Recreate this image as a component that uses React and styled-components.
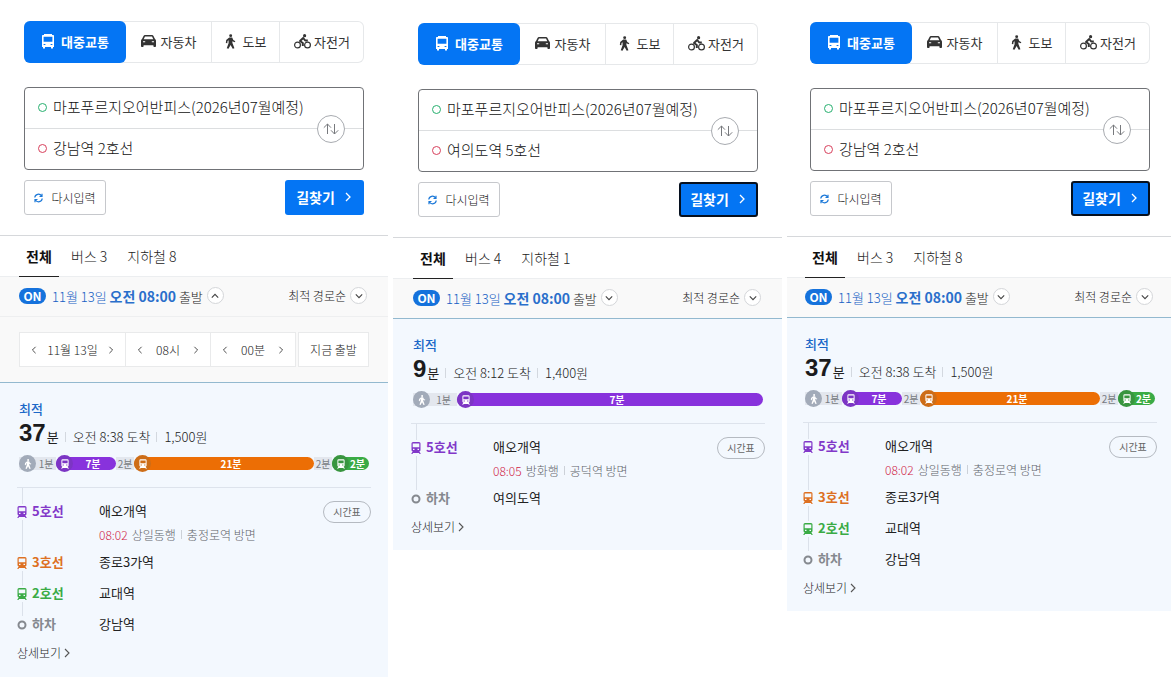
import React from 'react';
import styled, { createGlobalStyle, css } from 'styled-components';

const Global = createGlobalStyle`
  * { box-sizing: border-box; }
  body { margin: 0; background: #fff; }
  body, button, input { font-family: "Noto Sans CJK KR", "Noto Sans", sans-serif; color: #222; }
  button { border: 0; padding: 0; background: none; cursor: pointer; }
  ul { list-style: none; margin: 0; padding: 0; }
`;

const Page = styled.main`
  display: grid;
  grid-template-columns: 388fr 389fr 384fr;
  gap: 5px;
  align-items: start;
`;
const Panel = styled.section`
  min-width: 0;
  padding-top: ${p => p.$top}px;
`;
const Search = styled.form`
  padding: 0 ${p => p.$right}px 20px ${p => p.$left}px;
  border-bottom: 1px solid #d6d8db;
`;

const Modes = styled.div`
  display: grid;
  grid-template-columns: 102fr 86fr 68fr 84fr;
  height: 42px;
  border-radius: 6px;
  box-shadow: inset 0 0 0 1px #e6e8ea;
`;
const Mode = styled.button`
  display: flex;
  align-items: center;
  justify-content: center;
  gap: ${p => p.$gap}px;
  padding-bottom: 2px;
  font-size: 13px;
  color: #333;
  border-right: 1px solid #e6e8ea;
  white-space: nowrap;
  &:last-child { border-right: 0; }
  ${p => p.$active && css`
    background: #0475f4;
    color: #fff;
    font-weight: 700;
    border: 0;
    border-radius: 6px;
  `}
`;

const Places = styled.div`
  position: relative;
  margin-top: 24px;
  border: 1px solid #707276;
  border-radius: 4px;
`;
const Place = styled.label`
  display: flex;
  align-items: center;
  gap: 6px;
  height: 40px;
  padding: 0 0 2px 13px;
  & + & { border-top: 1px solid #dcdee0; height: 41px; }
`;
const Dot = styled.span`
  width: 9px;
  height: 9px;
  flex: none;
  border: 1px solid ${p => p.$color};
  border-radius: 50%;
`;
const PlaceInput = styled.input`
  flex: 1;
  min-width: 0;
  height: 30px;
  padding: 0 0 2px;
  border: 0;
  outline: 0;
  background: none;
  font-size: 15px;
  font-weight: 300;
  color: #111;
`;
const Swap = styled.button`
  position: absolute;
  right: 18px;
  top: 27px;
  width: 28px;
  height: 28px;
  display: grid;
  place-items: center;
  background: #fff;
  border: 1px solid #a8abb0;
  border-radius: 50%;
`;
const Actions = styled.div`
  display: flex;
  justify-content: space-between;
  margin-top: 10px;
`;
const Reset = styled.button`
  display: flex;
  align-items: center;
  justify-content: center;
  gap: 8px;
  width: 82px;
  height: 35px;
  border: 1px solid #c6c8cc;
  border-radius: 3px;
  font-size: 12px;
  font-weight: 300;
`;
const Find = styled.button`
  display: flex;
  align-items: center;
  justify-content: center;
  gap: 8px;
  width: 79px;
  height: 35px;
  padding-bottom: 2px;
  background: #0475f4;
  border-radius: 3px;
  color: #fff;
  font-size: 14px;
  font-weight: 700;
  ${p => p.$focused && css`border: 2px solid #06101f;`}
`;

const Tabs = styled.nav`
  display: flex;
  height: 41px;
  padding-left: ${p => p.$left}px;
  gap: 12px;
  border-bottom: 1px solid #eceef0;
`;
const Tab = styled.button`
  height: 41px;
  padding-bottom: 2px;
  font-size: 14px;
  font-weight: 300;
  & + & { margin-right: 8px; }
  ${p => p.$active && css`
    width: 40px;
    padding-bottom: 0;
    font-weight: 700;
    color: #111;
    border-bottom: 1px solid #222;
  `}
`;

const Filter = styled.div`
  display: flex;
  align-items: center;
  height: 39px;
  padding: 0 ${p => p.$right}px 2px ${p => p.$left}px;
  background: #f9f9f9;
`;
const On = styled.span`
  width: 27px;
  height: 16px;
  margin-right: 6px;
  border-radius: 8px;
  background: #1572dc;
  color: #fff;
  font-size: 12px;
  font-weight: 700;
  line-height: 15px;
  text-align: center;
`;
const Depart = styled.button`
  display: flex;
  align-items: center;
  gap: 4px;
  font-size: 13px;
  font-weight: 300;
  white-space: nowrap;
  time { color: #1560c4; }
  b { font-size: 14px; font-weight: 700; color: #2a6fcb; }
`;
const Sort = styled(Depart)`
  margin-left: auto;
  font-size: 12px;
`;
const Round = styled.span`
  display: grid;
  place-items: center;
  width: 17px;
  height: 17px;
  border: 1px solid #d4d6d9;
  border-radius: 50%;
  background: #fff;
`;

const Picker = styled.div`
  display: flex;
  gap: 2px;
  padding: 15px 19px;
  border-top: 1px solid #eeeff0;
  background: #f9f9f9;
`;
const Fields = styled.div`
  flex: 1;
  display: grid;
  grid-template-columns: 105fr 85fr 85fr;
  border: 1px solid #e9eaeb;
  background: #fff;
`;
const Field = styled.div`
  display: flex;
  align-items: center;
  justify-content: space-between;
  height: 33px;
  padding: 0 10px;
  font-size: 12px;
  font-weight: 300;
  & + & { border-left: 1px solid #e9eaeb; }
`;
const Step = styled.button`
  display: grid;
  place-items: center;
  width: 8px;
  height: 20px;
`;
const Now = styled.button`
  width: 71px;
  border: 1px solid #e9eaeb;
  background: #fff;
  font-size: 12px;
  font-weight: 300;
`;

const Result = styled.article`
  padding: 16px ${p => p.$right}px ${p => (p.$open ? 14 : 13)}px ${p => p.$left}px;
  border-top: 1px solid #93b9cf;
  background: #f3f8fe;
`;
const Best = styled.h2`
  margin: 0 0 0 2px;
  font-size: 13px;
  line-height: 20px;
  font-weight: 500;
  color: #1c68c8;
`;
const Summary = styled.div`
  display: flex;
  align-items: flex-end;
  margin-left: 2px;
  height: 28px;
  font-size: 13px;
  font-weight: 300;
  line-height: 20px;
  white-space: nowrap;
`;
const Minutes = styled.strong`
  margin-right: 1px;
  color: #1b1b1d;
  font: 700 24px/28px "Liberation Sans", sans-serif;
`;
const Unit = styled.span`
  font-weight: 400;
`;
const Part = styled.span`
  display: flex;
  align-items: center;
  &::before {
    content: "";
    width: 1px;
    height: 10px;
    margin: 0 7px 0 6px;
    background: #d3d8df;
  }
`;

const Bar = styled.div`
  display: flex;
  align-items: center;
  height: 17px;
  margin: 8px 2px 0;
`;
const Segment = styled.div`
  display: flex;
  align-items: center;
  flex: ${p => p.$grow} 1 0;
  min-width: 0;
  height: 13px;
  border-radius: ${p => (p.$walk ? 0 : 7)}px;
  background: ${p => (p.$walk ? '#e3e7ee' : p.$color)};
  color: ${p => (p.$walk ? '#777b82' : '#fff')};
  font-size: 10px;
  font-weight: ${p => (p.$walk ? 400 : 700)};
`;
const SegmentText = styled.span`
  flex: 1;
  padding-right: ${p => (p.$walk ? 0 : 3)}px;
  text-align: center;
  white-space: nowrap;
`;
const Badge = styled.span`
  display: grid;
  place-items: center;
  flex: none;
  width: 17px;
  height: 17px;
  border-radius: 50%;
  color: #fff;
  background: ${p => p.$color};
`;

const Stops = styled.ul`
  position: relative;
  margin-top: 15px;
  padding-top: 13px;
  border-top: 1px solid #dde3ec;
  &::before {
    content: "";
    position: absolute;
    left: 5px;
    top: 0;
    bottom: 20px;
    width: 1px;
    background: #dbe1ea;
  }
`;
const Stop = styled.li`
  display: grid;
  grid-template-columns: 11px 71px 1fr auto;
  align-items: center;
  min-height: 22px;
  margin-bottom: 9px;
  &:last-child { margin-bottom: 3px; }
`;
const Mark = styled.span`
  position: relative;
  display: grid;
  place-items: center;
  justify-content: start;
  height: 16px;
  background: #f3f8fe;
  color: ${p => p.$color};
`;
const Line = styled.span`
  padding: 0 0 2px 4px;
  font-size: 13px;
  line-height: 20px;
  font-weight: 700;
  color: ${p => p.$color};
`;
const Station = styled.span`
  padding-bottom: 2px;
  font-size: 13px;
  line-height: 20px;
`;
const Bound = styled.span`
  grid-column: 3;
  display: flex;
  align-items: center;
  height: 20px;
  padding-top: 2px;
  font-size: 12px;
  font-weight: 300;
  color: #5f636a;
  white-space: nowrap;
  b { margin-right: 4px; font-weight: 300; color: #d01c46; }
  i { width: 1px; height: 9px; margin: 0 5px; background: #ccd1d8; }
`;
const Timetable = styled.button`
  width: 48px;
  height: 22px;
  padding-bottom: 1px;
  border: 1px solid #b5bac1;
  border-radius: 11px;
  font-size: 10px;
  color: #666;
`;
const More = styled.a`
  display: inline-flex;
  align-items: center;
  gap: 1px;
  font-size: 12px;
  line-height: 18px;
  font-weight: 300;
  color: #222;
  text-decoration: none;
`;

const paths = {
  right: 'M3 1l4 4-4 4', left: 'M7 1l-4 4 4 4', up: 'M1 7l4-4 4 4', down: 'M1 3l4 4 4-4',
};
const Chevron = ({ dir, size = 8, color = '#444', width = 1.4 }) => (
  <svg width={size} height={size} viewBox="0 0 10 10" fill="none" stroke={color} strokeWidth={width}><path d={paths[dir]} /></svg>
);
const BusIcon = () => (
  <svg width="14" height="15" viewBox="0 0 14 15" fill="currentColor" fillRule="evenodd">
    <path d="M3 0h8v1h1.200q.8 0 .8 .8V13h-1v1.500h-2V13H4v1.500H2V13H1V1.800Q1 1 1.800 1H3zM2.600 2.800v5h8.800v-5zM2.600 10v1h1.800v-1zM9.600 10v1h1.800v-1z" />
  </svg>
);
const CarIcon = () => (
  <svg width="15" height="12" viewBox="0 0 15 12" fill="currentColor" fillRule="evenodd">
    <path d="M4 0h7q1 0 1.500 .9L14 4q1 .7 1 1.800V11q0 1-.8 1h-1q-.8 0-.8-1v-.8H2.600V11q0 1-.8 1h-1Q0 12 0 11V5.800Q0 4.700 1 4L2.500.9Q3 0 4 0zM4 1.400L2.700 4.200h9.600L11 1.400zM2 6.200v1h2.200v-1zM10.800 6.200v1H13v-1z" />
  </svg>
);
const WalkIcon = ({ w = 11, h = 15 }) => (
  <svg width={w} height={h} viewBox="0 0 12 16" fill="currentColor">
    <circle cx="6.200" cy="1.600" r="1.600" />
    <path d="M4.600 3.600h3.200l1.300 2.700 2.200 1.300-.7 1.300-2.600-1.300.1 2L10.300 15.400l-1.900.5L6.100 11.700 3.800 16l-1.900-.7L3.900 10V6.500L2.800 7.400l-.3 2.500-1.600-.2.400-3.300z" />
  </svg>
);
const BikeIcon = () => (
  <svg width="17" height="15" viewBox="0 0 17 15" fill="none" stroke="currentColor">
    <circle cx="3.500" cy="11" r="2.900" strokeWidth="1.200" />
    <circle cx="13.500" cy="11" r="2.900" strokeWidth="1.200" />
    <circle cx="10.600" cy="1.700" r="1.600" fill="currentColor" stroke="none" />
    <path d="M8.800 12V9L6 7l3.200-3 2 2.500h2.600" strokeWidth="2" strokeLinejoin="round" />
  </svg>
);
const ResetIcon = () => (
  <svg width="9" height="10" viewBox="0 0 9 10" fill="none" stroke="#1b78d8" strokeWidth="1.200">
    <path d="M.8 4.500A3.600 3.600 0 0 1 7.500 3M8.200 5.500A3.600 3.600 0 0 1 1.500 7M8 .8V3.500H5.500M1 9.200V6.500H3.500" />
  </svg>
);
const SwapIcon = () => (
  <svg width="16" height="12" viewBox="0 0 16 12" fill="none" stroke="#77797d">
    <path d="M4.500 11V1M.8 4.700L4.500 1l3.500 3.700M11.500 1v10M8 7.300l3.500 3.700 3.700-3.700" />
  </svg>
);
const TrainIcon = ({ size = 9 }) => (
  <svg width={size} height={Math.round(size * 1.2)} viewBox="0 0 10 12" fill="currentColor" fillRule="evenodd">
    <path d="M2 0h6q1.500 0 1.500 1.500V8Q9.500 9.200 8.300 9.200L9.800 12H8.500L8 11H2l-.5 1H.2L1.700 9.200Q.5 9.200.5 8V1.500Q.5 0 2 0zM1.700 1.600v3.600h6.600V1.600zM2 6.700V8h1.500V6.700zM6.500 6.700V8H8V6.700z" />
  </svg>
);
const EndIcon = () => (
  <svg width="10" height="10" viewBox="0 0 10 10" fill="none" stroke="#85898f" strokeWidth="2"><circle cx="5" cy="5" r="3.500" /></svg>
);

const PURPLE = '#8832dc';
const ORANGE = '#ec6e05';
const GREEN = '#3aab45';
const GRAY = '#a2abb9';

const longRoute = {
  to: '강남역 2호선', bus: 3, subway: 8, minutes: 37, arrive: '오전 8:38 도착', fare: '1,500원',
  segments: [
    { grow: 37, walk: true, badge: GRAY, text: '1분' },
    { grow: 60, color: PURPLE, badge: '#7c35c4', text: '7분' },
    { grow: 18, walk: true, text: '2분' },
    { grow: 180, color: ORANGE, badge: '#cd6d18', text: '21분' },
    { grow: 18, walk: true, text: '2분' },
    { grow: 37, color: GREEN, badge: '#38953f', text: '2분' },
  ],
  stops: [
    { line: '5호선', color: '#8238c9', station: '애오개역', time: '08:02', bound: '상일동행', via: '충정로역 방면' },
    { line: '3호선', color: '#dd7022', station: '종로3가역' },
    { line: '2호선', color: GREEN, station: '교대역' },
    { line: '하차', color: '#85898f', station: '강남역', end: true },
  ],
};
const shortRoute = {
  to: '여의도역 5호선', bus: 4, subway: 1, minutes: 9, arrive: '오전 8:12 도착', fare: '1,400원',
  segments: [
    { grow: 44, walk: true, badge: GRAY, text: '1분' },
    { grow: 306, color: PURPLE, badge: '#7c35c4', text: '7분' },
  ],
  stops: [
    { line: '5호선', color: '#8238c9', station: '애오개역', time: '08:05', bound: '방화행', via: '공덕역 방면' },
    { line: '하차', color: '#85898f', station: '여의도역', end: true },
  ],
};

function RoutePanel({ route, top, left, right, open, focused }) {
  const inner = right - 7;
  return (
    <Panel $top={top}>
      <Search $left={left} $right={right} onSubmit={e => e.preventDefault()}>
        <Modes>
          <Mode type="button" $active $gap={6}><BusIcon />대중교통</Mode>
          <Mode type="button" $gap={5}><CarIcon />자동차</Mode>
          <Mode type="button" $gap={7}><WalkIcon />도보</Mode>
          <Mode type="button" $gap={3}><BikeIcon />자전거</Mode>
        </Modes>
        <Places>
          <Place><Dot $color="#27b06f" /><PlaceInput aria-label="출발지" defaultValue="마포푸르지오어반피스(2026년07월예정)" /></Place>
          <Place><Dot $color="#d8405c" /><PlaceInput aria-label="도착지" defaultValue={route.to} /></Place>
          <Swap type="button" aria-label="출발지 도착지 바꾸기"><SwapIcon /></Swap>
        </Places>
        <Actions>
          <Reset type="reset"><ResetIcon />다시입력</Reset>
          <Find $focused={focused}>길찾기<Chevron dir="right" size={10} color="#fff" width={1.3} /></Find>
        </Actions>
      </Search>
      <Tabs $left={left - 5}>
        <Tab $active>전체</Tab>
        <Tab>버스 {route.bus}</Tab>
        <Tab>지하철 {route.subway}</Tab>
      </Tabs>
      <Filter $left={left - 5} $right={inner + 4}>
        <On>ON</On>
        <Depart>
          <span><time>11월 13일 <b>오전 08:00</b></time> 출발</span>
          <Round><Chevron dir={open ? 'up' : 'down'} /></Round>
        </Depart>
        <Sort>최적 경로순<Round><Chevron dir="down" /></Round></Sort>
      </Filter>
      {open && (
        <Picker>
          <Fields>
            {['11월 13일', '08시', '00분'].map(t => (
              <Field key={t}>
                <Step aria-label="이전"><Chevron dir="left" width={1.2} /></Step>
                {t}
                <Step aria-label="다음"><Chevron dir="right" width={1.2} /></Step>
              </Field>
            ))}
          </Fields>
          <Now>지금 출발</Now>
        </Picker>
      )}
      <Result $left={left - 7} $right={inner} $open={open}>
        <Best>최적</Best>
        <Summary>
          <Minutes>{route.minutes}</Minutes><Unit>분</Unit>
          <Part>{route.arrive}</Part>
          <Part>{route.fare}</Part>
        </Summary>
        <Bar>
          {route.segments.map((s, i) => (
            <Segment key={i} $grow={s.grow} $walk={s.walk} $color={s.color}>
              {s.badge && <Badge $color={s.badge}>{s.walk ? <WalkIcon w={8} h={10} /> : <TrainIcon size={8} />}</Badge>}
              <SegmentText $walk={s.walk}>{s.text}</SegmentText>
            </Segment>
          ))}
        </Bar>
        <Stops>
          {route.stops.map(s => (
            <Stop key={s.line}>
              <Mark $color={s.color}>{s.end ? <EndIcon /> : <TrainIcon size={10} />}</Mark>
              <Line $color={s.color}>{s.line}</Line>
              <Station>{s.station}</Station>
              {s.time && <Timetable>시간표</Timetable>}
              {s.time && <Bound><b>{s.time}</b>{s.bound}<i />{s.via}</Bound>}
            </Stop>
          ))}
        </Stops>
        <More href="#detail">상세보기<Chevron dir="right" size={10} color="#555" width={1.1} /></More>
      </Result>
    </Panel>
  );
}

export default function App() {
  return (
    <>
      <Global />
      <Page>
        <RoutePanel route={longRoute} top={21} left={24} right={24} open />
        <RoutePanel route={shortRoute} top={23} left={25} right={24} focused />
        <RoutePanel route={longRoute} top={22} left={23} right={21} focused />
      </Page>
    </>
  );
}
